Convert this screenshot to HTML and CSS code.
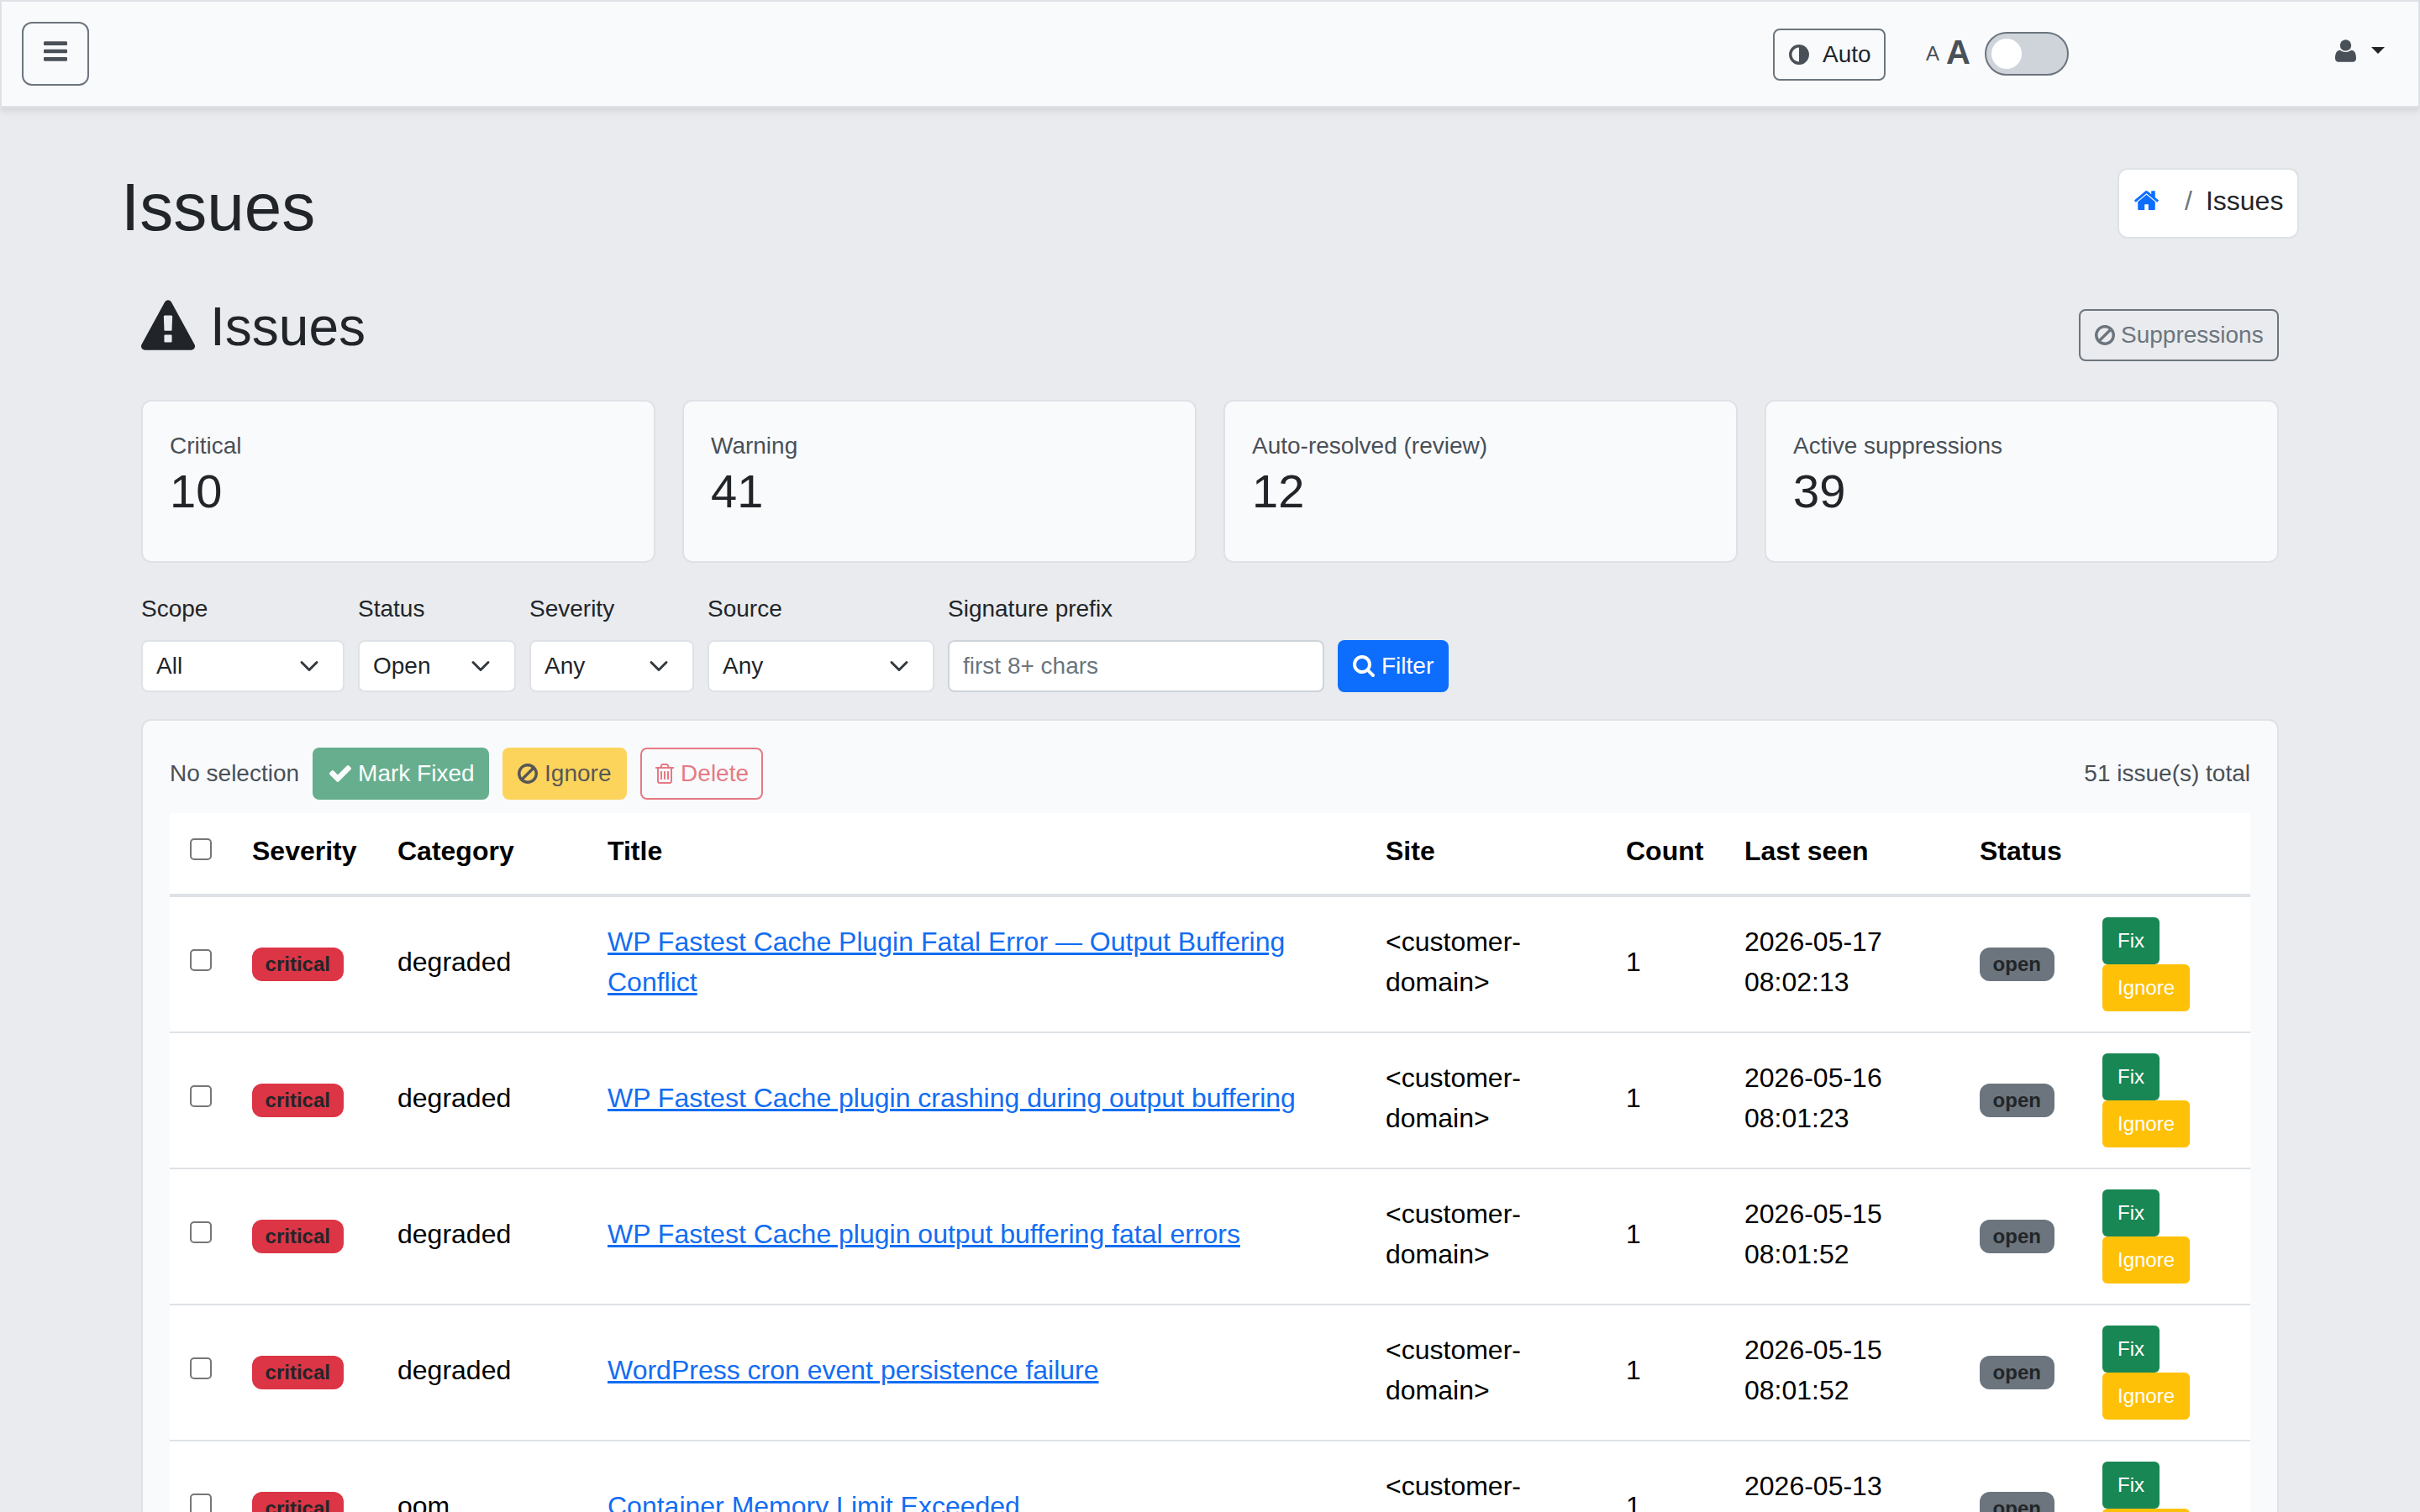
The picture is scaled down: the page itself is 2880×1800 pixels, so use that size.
FILE: index.html
```html
<!DOCTYPE html>
<html lang="en">
<head>
<meta charset="utf-8">
<title>Issues</title>
<link rel="stylesheet" href="styles.css">
</head>
<body>
<svg class="sprite" aria-hidden="true">
  <symbol id="bars" viewBox="128 256 1536 1280"><path d="M1664 1344v128q0 26-19 45t-45 19h-1408q-26 0-45-19t-19-45v-128q0-26 19-45t45-19h1408q26 0 45 19t19 45zm0-512v128q0 26-19 45t-45 19h-1408q-26 0-45-19t-19-45v-128q0-26 19-45t45-19h1408q26 0 45 19t19 45zm0-512v128q0 26-19 45t-45 19h-1408q-26 0-45-19t-19-45v-128q0-26 19-45t45-19h1408q26 0 45 19t19 45z"/></symbol>
  <symbol id="adjust" viewBox="128 128 1536 1536"><path d="M896 1440v-1088q-148 0-273 73t-198 198-73 273 73 273 198 198 273 73zm768-544q0 209-103 385.5t-279.5 279.5-385.5 103-385.5-103-279.5-279.5-103-385.5 103-385.5 279.5-279.5 385.5-103 385.5 103 279.5 279.5 103 385.5z"/></symbol>
  <symbol id="ban" viewBox="128 125 1536 1539"><path d="M1440 893q0-161-87-295l-754 753q137 89 297 89 111 0 211.5-43.5t173.5-116.5 116-174.5 43-212.5zm-999 299l755-754q-135-91-300-91-148 0-273 73t-198 199-73 274q0 162 89 299zm1223-299q0 157-61 300t-163.5 246-245 164-298.5 61-298.5-61-245-164-163.5-246-61-300 61-299.5 163.5-245.5 245-164 298.5-61 298.5 61 245 164 163.5 245.5 61 299.5z"/></symbol>
  <symbol id="user" viewBox="0 0 25.4 27"><circle cx="12.7" cy="6.8" r="6.8"/><path d="M6 12.8Q9 15.1 12.7 15.1T19.4 12.8C23.6 12.8 25.4 17 25.4 22.5Q25.4 27 21.2 27H4.2Q0 27 0 22.5C0 17 1.8 12.8 6 12.8z"/></symbol>
  <symbol id="home" viewBox="89 248 1614 1288"><path d="M1472 992v480q0 26-19 45t-45 19h-384v-384h-256v384h-384q-26 0-45-19t-19-45v-480q0-1 .5-3t.5-3l575-474 575 474q1 2 1 6zm223-69l-62 74q-8 9-21 11h-3q-13 0-21-7l-692-577-692 577q-12 8-24 7-13-2-21-11l-62-74q-8-10-7-23.5t11-21.5l719-599q32-26 76-26t76 26l244 204v-195q0-14 9-23t23-9h192q14 0 23 9t9 23v408l219 182q10 8 11 21.5t-7 23.5z"/></symbol>
  <symbol id="warn" viewBox="0 0 1792 1664"><path d="M1024 1375v-190q0-14-9.5-23.5t-22.5-9.5h-192q-13 0-22.5 9.5t-9.5 23.5v190q0 14 9.5 23.5t22.5 9.5h192q13 0 22.5-9.5t9.5-23.5zm-2-374l18-459q0-12-10-19-13-11-24-11h-220q-11 0-24 11-10 7-10 21l17 457q0 10 10 16.5t24 6.5h185q14 0 23.5-6.5t10.5-16.5zm-14-934l768 1408q35 63-2 126-17 29-46.5 46t-63.5 17h-1536q-34 0-63.5-17t-46.5-46q-37-63-2-126l768-1408q17-31 47-49t65-18 65 18 47 49z"/></symbol>
  <symbol id="search" viewBox="64 128 1664 1664"><path d="M1216 832q0-185-131.5-316.5t-316.5-131.5-316.5 131.5-131.5 316.5 131.5 316.5 316.5 131.5 316.5-131.5 131.5-316.5zm512 832q0 52-38 90t-90 38q-54 0-90-38l-343-342q-179 124-399 124-143 0-273.5-55.5t-225-150-150-225-55.5-273.5 55.5-273.5 150-225 225-150 273.5-55.5 273.5 55.5 225 150 150 225 55.5 273.5q0 220-124 399l343 343q37 37 37 90z"/></symbol>
  <symbol id="check" viewBox="121 334 1550 1188"><path d="M1671 566q0 40-28 68l-724 724-136 136q-28 28-68 28t-68-28l-136-136-362-362q-28-28-28-68t28-68l136-136q28-28 68-28t68 28l294 295 656-657q28-28 68-28t68 28l136 136q28 28 28 68z"/></symbol>
  <symbol id="trash" viewBox="192 128 1408 1536"><path d="M704 736v576q0 14-9 23t-23 9h-64q-14 0-23-9t-9-23v-576q0-14 9-23t23-9h64q14 0 23 9t9 23zm256 0v576q0 14-9 23t-23 9h-64q-14 0-23-9t-9-23v-576q0-14 9-23t23-9h64q14 0 23 9t9 23zm256 0v576q0 14-9 23t-23 9h-64q-14 0-23-9t-9-23v-576q0-14 9-23t23-9h64q14 0 23 9t9 23zm128 724v-948h-896v948q0 22 7 40.5t14.5 27 10.5 8.5h832q3 0 10.5-8.5t14.5-27 7-40.5zm-672-1076h448l-48-117q-7-9-17-11h-317q-10 2-17 11zm928 32v64q0 14-9 23t-23 9h-96v948q0 83-47 143.5t-113 60.5h-832q-66 0-113-58.5t-47-141.5v-952h-96q-14 0-23-9t-9-23v-64q0-14 9-23t23-9h309l70-167q15-37 54-63t79-26h320q40 0 79 26t54 63l70 167h309q14 0 23 9t9 23z"/></symbol>
  <symbol id="chevron" viewBox="0 0 16 16"><path fill="none" stroke="#343a40" stroke-linecap="round" stroke-linejoin="round" stroke-width="2" d="m2 5 6 6 6-6"/></symbol>
</svg>

<header class="topbar">
  <button class="menu-btn" aria-label="Menu"><svg class="i-bars"><use href="#bars"/></svg></button>
  <div class="tools">
    <button class="btn btn-theme"><svg class="i24"><use href="#adjust"/></svg>Auto</button>
    <div class="font-size"><span class="a-small">A</span><span class="a-big">A</span><span class="switch"><span class="thumb"></span></span></div>
    <div class="account"><svg class="i-user"><use href="#user"/></svg><span class="caret"></span></div>
  </div>
</header>

<main class="page">
  <div class="page-head">
    <h1>Issues</h1>
    <nav class="breadcrumb"><svg class="i-home"><use href="#home"/></svg><span class="slash">/</span><span>Issues</span></nav>
  </div>

  <div class="content">
    <div class="section-head">
      <h2><svg class="i-warn"><use href="#warn"/></svg>Issues</h2>
      <button class="btn btn-suppress"><svg class="i24"><use href="#ban"/></svg>Suppressions</button>
    </div>

    <div class="stats">
      <div class="card stat"><div class="stat-label">Critical</div><div class="stat-value">10</div></div>
      <div class="card stat"><div class="stat-label">Warning</div><div class="stat-value">41</div></div>
      <div class="card stat"><div class="stat-label">Auto-resolved (review)</div><div class="stat-value">12</div></div>
      <div class="card stat"><div class="stat-label">Active suppressions</div><div class="stat-value">39</div></div>
    </div>

    <div class="filters">
      <div class="field f-scope"><label>Scope</label><div class="select">All<svg class="i24"><use href="#chevron"/></svg></div></div>
      <div class="field f-status"><label>Status</label><div class="select">Open<svg class="i24"><use href="#chevron"/></svg></div></div>
      <div class="field f-severity"><label>Severity</label><div class="select">Any<svg class="i24"><use href="#chevron"/></svg></div></div>
      <div class="field f-source"><label>Source</label><div class="select">Any<svg class="i24"><use href="#chevron"/></svg></div></div>
      <div class="field f-sig"><label>Signature prefix</label><div class="select input">first 8+ chars</div></div>
      <button class="btn btn-filter"><svg class="i-search"><use href="#search"/></svg>Filter</button>
    </div>

    <section class="card list">
      <div class="bulk">
        <span class="muted">No selection</span>
        <button class="btn btn-fixed"><svg class="i-check"><use href="#check"/></svg>Mark Fixed</button>
        <button class="btn btn-ignore"><svg class="i24"><use href="#ban"/></svg>Ignore</button>
        <button class="btn btn-delete"><svg class="i-trash"><use href="#trash"/></svg>Delete</button>
        <span class="muted total">51 issue(s) total</span>
      </div>
      <table class="issues">
        <colgroup><col class="c-check"><col class="c-sev"><col class="c-cat"><col class="c-title"><col class="c-site"><col class="c-count"><col class="c-seen"><col class="c-status"><col class="c-act"></colgroup>
        <thead>
          <tr><th><span class="box"></span></th><th>Severity</th><th>Category</th><th>Title</th><th>Site</th><th>Count</th><th>Last seen</th><th>Status</th><th></th></tr>
        </thead>
        <tbody>
          <tr><td><span class="box"></span></td><td class="mid"><span class="badge critical">critical</span></td><td>degraded</td><td><a>WP Fastest Cache Plugin Fatal Error — Output Buffering Conflict</a></td><td>&lt;customer-domain&gt;</td><td>1</td><td>2026-05-17 08:02:13</td><td class="mid"><span class="badge open">open</span></td><td class="mid"><div class="actions"><button class="sm fix">Fix</button><button class="sm ign">Ignore</button></div></td></tr>
          <tr><td><span class="box"></span></td><td class="mid"><span class="badge critical">critical</span></td><td>degraded</td><td><a>WP Fastest Cache plugin crashing during output buffering</a></td><td>&lt;customer-domain&gt;</td><td>1</td><td>2026-05-16 08:01:23</td><td class="mid"><span class="badge open">open</span></td><td class="mid"><div class="actions"><button class="sm fix">Fix</button><button class="sm ign">Ignore</button></div></td></tr>
          <tr><td><span class="box"></span></td><td class="mid"><span class="badge critical">critical</span></td><td>degraded</td><td><a>WP Fastest Cache plugin output buffering fatal errors</a></td><td>&lt;customer-domain&gt;</td><td>1</td><td>2026-05-15 08:01:52</td><td class="mid"><span class="badge open">open</span></td><td class="mid"><div class="actions"><button class="sm fix">Fix</button><button class="sm ign">Ignore</button></div></td></tr>
          <tr><td><span class="box"></span></td><td class="mid"><span class="badge critical">critical</span></td><td>degraded</td><td><a>WordPress cron event persistence failure</a></td><td>&lt;customer-domain&gt;</td><td>1</td><td>2026-05-15 08:01:52</td><td class="mid"><span class="badge open">open</span></td><td class="mid"><div class="actions"><button class="sm fix">Fix</button><button class="sm ign">Ignore</button></div></td></tr>
          <tr><td><span class="box"></span></td><td class="mid"><span class="badge critical">critical</span></td><td>oom</td><td><a>Container Memory Limit Exceeded</a></td><td>&lt;customer-domain&gt;</td><td>1</td><td>2026-05-13 08:01:52</td><td class="mid"><span class="badge open">open</span></td><td class="mid"><div class="actions"><button class="sm fix">Fix</button><button class="sm ign">Ignore</button></div></td></tr>
        </tbody>
      </table>
    </section>
  </div>
</main>
</body>
</html>
```
FILE: styles.css
```css
* { box-sizing: border-box; }
html { height: 1800px; overflow: hidden; }
body {
  margin: 0;
  height: 1800px;
  overflow: hidden;
  background: #e9ebee;
  color: #212529;
  font: 32px/48px "Liberation Sans", Arial, sans-serif;
}
button { font-family: inherit; margin: 0; cursor: pointer; }
h1, h2 { margin: 0; font-weight: 400; }
svg { fill: currentColor; flex: none; display: block; }
.sprite { position: absolute; width: 0; height: 0; }

.i24 { width: 24px; height: 24px; }
.i-bars { width: 28px; height: 24px; }
.i-user { width: 25px; height: 27px; }
.i-home { width: 29px; height: 23px; }
.i-warn { width: 64px; height: 60px; }
.i-search { width: 26px; height: 26px; }
.i-check { width: 26px; height: 20px; }
.i-trash { width: 22px; height: 24px; }

/* Top bar */
.topbar {
  display: flex;
  justify-content: space-between;
  height: 128px;
  padding: 24px 40px 0 24px;
  border: 2px solid #dee2e6;
  background: #f9fafc;
  box-shadow: 0 4px 8px rgba(0, 0, 0, .1);
}
.menu-btn {
  display: flex;
  justify-content: center;
  width: 80px;
  height: 76px;
  padding: 21px 0 0;
  border: 2px solid #6c757d;
  border-radius: 12px;
  background: transparent;
  color: #495057;
}
.tools { display: flex; align-items: flex-start; }
.btn {
  display: flex;
  align-items: center;
  height: 62px;
  padding: 0 17px;
  border: 2px solid transparent;
  border-radius: 8px;
  font-size: 28px;
  line-height: 42px;
  gap: 8px;
  white-space: nowrap;
  background: transparent;
}
.btn-theme { width: 134px; margin-top: 8px; gap: 16px; border-color: #6c757d; color: #212529; }
.btn-theme svg { color: #495057; }
.font-size { display: flex; margin: 12px 0 0 48px; color: #495057; }
.a-small { width: 16px; font-size: 24px; line-height: 52px; }
.a-big { width: 29px; margin-left: 8px; font-size: 40px; font-weight: 700; line-height: 48px; }
.switch {
  width: 100px;
  height: 52px;
  margin-left: 17px;
  padding: 6px;
  border: 2px solid #6c757d;
  border-radius: 26px;
  background: #ced4da;
}
.thumb { display: block; width: 36px; height: 36px; border-radius: 50%; background: #fff; }
.account { display: flex; margin: 21px 0 0 317px; color: #495057; }
.caret {
  width: 0;
  height: 0;
  margin: 9px 0 0 18px;
  border: 8px solid transparent;
  border-top-color: #212529;
  border-bottom: 0;
}

/* Page heading */
.page { padding: 0 144px; }
.page-head { display: flex; justify-content: space-between; height: 168px; padding-top: 72px; }
h1 { font-size: 80px; line-height: 94px; }
.breadcrumb {
  display: flex;
  width: 216px;
  height: 84px;
  padding: 13px 0 0 18px;
  border: 2px solid #dee2e6;
  border-radius: 12px;
  background: #fff;
}
.i-home { margin-top: 12px; color: #0d6efd; }
.slash { margin: 0 16px 0 31px; color: #6c757d; }

.content { padding: 0 24px; }
.section-head { display: flex; justify-content: space-between; align-items: flex-start; height: 180px; }
h2 { display: flex; margin-top: 55px; font-size: 64px; line-height: 77px; gap: 18px; }
.i-warn { margin-top: 6px; }
.btn-suppress { width: 238px; margin-top: 72px; gap: 7px; border-color: #6c757d; color: #6c757d; }

/* Cards */
.card { border: 2px solid #dee2e6; border-radius: 12px; background: #f9fafc; }
.stats { display: grid; grid-template-columns: repeat(4, 1fr); gap: 32px; }
.stat { height: 194px; padding: 32px; }
.stat-label { font-size: 28px; line-height: 42px; color: #495057; }
.stat-value { font-size: 56px; line-height: 65px; }

/* Filters */
.filters { display: flex; gap: 16px; margin-top: 34px; align-items: flex-end; }
.field label { display: block; font-size: 28px; line-height: 42px; margin-bottom: 16px; }
.f-scope { width: 242px; }
.f-status { width: 188px; }
.f-severity { width: 196px; }
.f-source { width: 270px; }
.f-sig { width: 448px; }
.select {
  display: flex;
  justify-content: space-between;
  align-items: center;
  height: 62px;
  padding: 0 28px 0 16px;
  border: 2px solid #dee2e6;
  border-radius: 8px;
  background: #fff;
  font-size: 28px;
}
.input { border-color: #ced4da; color: #6c757d; }
.btn-filter { width: 132px; padding: 0 16px; background: #0d6efd; color: #fff; }

/* Issue list */
.list { margin-top: 32px; padding: 32px; }
.bulk { display: flex; align-items: center; gap: 16px; margin-bottom: 16px; }
.muted { font-size: 28px; color: #495057; }
.total { margin-left: auto; }
.btn-fixed { width: 210px; padding: 0 18px; background: #198754; color: #fff; opacity: .65; }
.btn-ignore { width: 148px; padding: 0 16px; background: #ffc107; color: #000; opacity: .65; }
.btn-delete { width: 146px; padding: 0 16px; border-color: #dc3545; color: #dc3545; opacity: .65; }

.issues { width: 2476px; table-layout: fixed; border-collapse: separate; border-spacing: 0; background: #fff; color: #000; }
.c-check { width: 74px; }
.c-sev { width: 173px; }
.c-cat { width: 250px; }
.c-title { width: 926px; }
.c-site { width: 286px; }
.c-count { width: 141px; }
.c-seen { width: 280px; }
.c-status { width: 146px; }
.c-act { width: 200px; }
th { height: 100px; padding: 21px 24px 27px; border-bottom: 4px solid #dee2e6; text-align: left; white-space: nowrap; }
td { padding: 21px 24px 27px; border-bottom: 2px solid #dee2e6; vertical-align: middle; }
td.mid { padding: 24px; }
.issues a { color: #126df2; text-decoration: underline; }
.box {
  display: block;
  width: 26px;
  height: 26px;
  margin-bottom: 4px;
  border: 2px solid #767676;
  border-radius: 5px;
  background: #fff;
}
.badge {
  display: block;
  width: max-content;
  height: 40px;
  padding: 0 15.6px;
  border-radius: 12px;
  font-size: 24px;
  font-weight: 700;
  line-height: 40px;
  color: #212529;
}
.critical { background: #dc3545; }
.open { background: #6c757d; }
.actions { display: flex; flex-direction: column; align-items: flex-start; }
.sm { height: 56px; padding: 0 18px; border: 0; border-radius: 6px; font-size: 24px; line-height: 56px; color: #fff; }
.fix { background: #198754; }
.ign { background: #ffc107; }
```
